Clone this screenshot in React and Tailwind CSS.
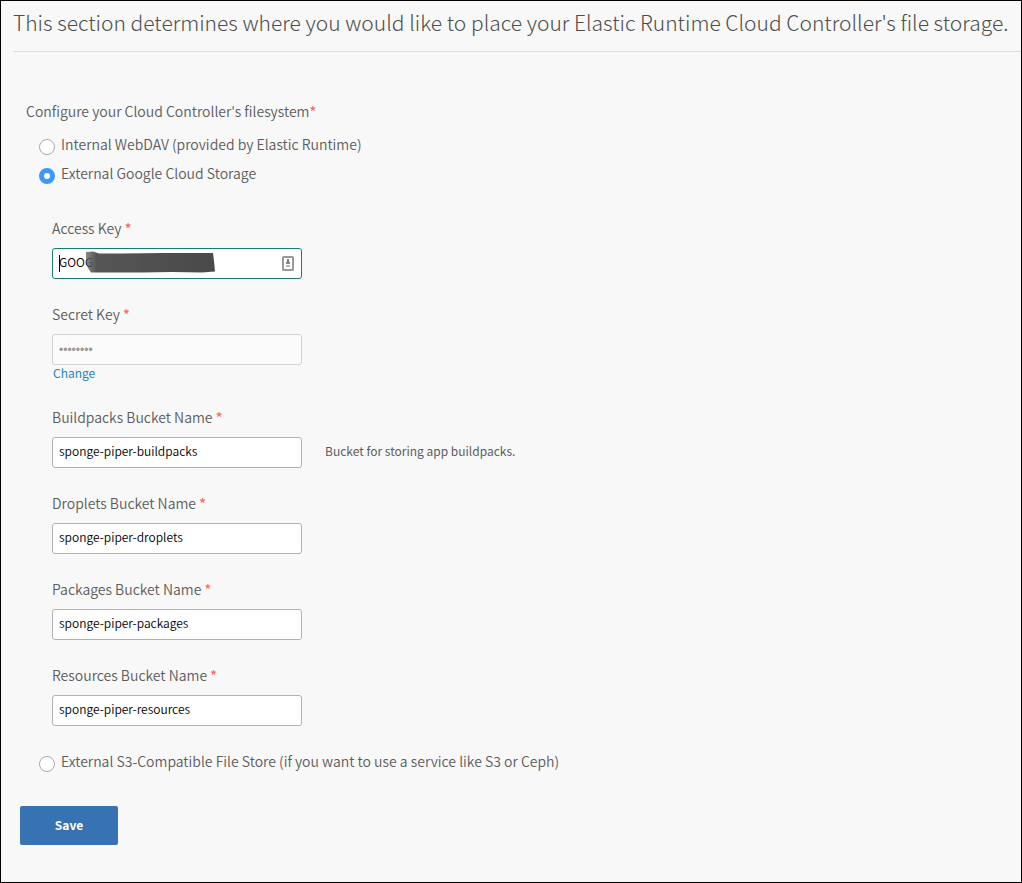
const buckets = [
  { id: "buildpacks", label: "Buildpacks Bucket Name", value: "sponge-piper-buildpacks", hint: "Bucket for storing app buildpacks." },
  { id: "droplets", label: "Droplets Bucket Name", value: "sponge-piper-droplets" },
  { id: "packages", label: "Packages Bucket Name", value: "sponge-piper-packages" },
  { id: "resources", label: "Resources Bucket Name", value: "sponge-piper-resources" },
];

const inputClass =
  "block h-[31px] w-full rounded-[3px] border px-1.5 text-xs outline-none";

function Required() {
  return <span className="font-medium text-[#f96b60]">*</span>;
}

function RadioOption({ id, label, defaultChecked }) {
  return (
    <div className="flex h-[29px] items-start gap-1.5 pt-px">
      <input
        type="radio"
        name="filesystem"
        id={id}
        defaultChecked={defaultChecked}
        className="mt-[7px] size-4 shrink-0 appearance-none rounded-full border border-[#aaaaaa] bg-white checked:border-[5px] checked:border-[#3b99fc]"
      />
      <label htmlFor={id}>{label}</label>
    </div>
  );
}

function Field({ id, label, hint, children }) {
  return (
    <div>
      <label htmlFor={id} className="mb-2 block">
        {label} <Required />
      </label>
      <div className="flex items-center gap-[23px]">
        <div className="relative w-[250px]">{children}</div>
        {hint && <p className="pb-1 text-xs font-normal">{hint}</p>}
      </div>
    </div>
  );
}

function Redaction() {
  return (
    <svg className="absolute top-0 left-[30px]" width="140" height="31" viewBox="0 0 140 31" aria-hidden="true">
      <defs>
        <filter id="soft">
          <feGaussianBlur stdDeviation="0.7" />
        </filter>
        <linearGradient id="smear" x1="0" x2="1" y1="0" y2="0">
          <stop offset="0" stopColor="#555" stopOpacity="0.7" />
          <stop offset="0.08" stopColor="#555" />
          <stop offset="1" stopColor="#4b4a4a" />
        </linearGradient>
      </defs>
      <path
        filter="url(#soft)"
        fill="url(#smear)"
        d="M4 4 L11 3.5 L17 5.5 L40 5.5 L80 5 L131 5 L132 13 L133 23.5 L120 24.5 L90 24 L60 24.5 L30 24.5 L9 24.5 L6 20 L4 12 Z"
      />
    </svg>
  );
}

function ContactIcon() {
  return (
    <svg className="absolute top-2 right-2" width="12" height="15" viewBox="0 0 12 15" aria-hidden="true">
      <rect x="1" y="1" width="10" height="13" rx="0.5" fill="#fff" stroke="#9a9a9a" strokeWidth="2" />
      <rect x="5" y="3" width="2" height="3" fill="#777" />
      <path d="M4 6h4v2H4z" fill="#888" />
      <path d="M4 9h4v2H4z" fill="#b5b5b5" />
    </svg>
  );
}

export default function App() {
  return (
    <main className="min-h-screen border border-black bg-[#f8f8f8] pl-3 font-['Noto_Sans_CJK_SC',sans-serif] text-sm leading-6 font-[350] text-[#5c5c5c]">
      <h1 className="border-b border-[#dddddd] pt-1 pb-3 text-[21px] leading-[34px] font-light text-[#4c4c4c]">
        This section determines where you would like to place your Elastic Runtime Cloud Controller's file storage.
      </h1>
      <form className="pt-[47px]" onSubmit={(e) => e.preventDefault()}>
        <fieldset className="pl-[13px]">
          <legend className="mb-2">
            Configure your Cloud Controller's filesystem
            <Required />
          </legend>
          <div className="pl-[13px]">
            <RadioOption id="webdav" label="Internal WebDAV (provided by Elastic Runtime)" />
            <RadioOption id="gcs" label="External Google Cloud Storage" defaultChecked />
            <div className="flex flex-col gap-[23px] pt-[27px] pb-[22px] pl-[13px]">
              <Field id="access-key" label="Access Key">
                <input id="access-key" type="text" defaultValue="GOOG" className={`${inputClass} border-[#13806f] bg-white pb-1 text-black`} />
                <span className="absolute top-[7px] left-[7px] h-[17px] w-px bg-black" />
                <Redaction />
                <ContactIcon />
              </Field>
              <div>
                <Field id="secret-key" label="Secret Key">
                  <input id="secret-key" type="password" disabled defaultValue="********" className={`${inputClass} border-[#d2d2d2] bg-[#fbfbfb] font-['Liberation_Sans',sans-serif] text-[#999999]`} />
                </Field>
                <a href="#change" className="mb-0.5 ml-px block w-fit text-xs leading-[15px] font-normal text-[#2185c9]">
                  Change
                </a>
              </div>
              {buckets.map((b) => (
                <Field key={b.id} id={b.id} label={b.label} hint={b.hint}>
                  <input id={b.id} type="text" defaultValue={b.value} className={`${inputClass} border-[#b2b2b2] bg-white pb-1 text-black`} />
                </Field>
              ))}
            </div>
            <RadioOption id="s3" label="External S3-Compatible File Store (if you want to use a service like S3 or Ceph)" />
          </div>
        </fieldset>
        <button type="submit" className="mt-[29px] mb-[37px] ml-[7px] h-[39px] w-[98px] rounded-xs bg-[#3772b3] pb-0.5 text-xs font-bold text-white">
          Save
        </button>
      </form>
    </main>
  );
}
